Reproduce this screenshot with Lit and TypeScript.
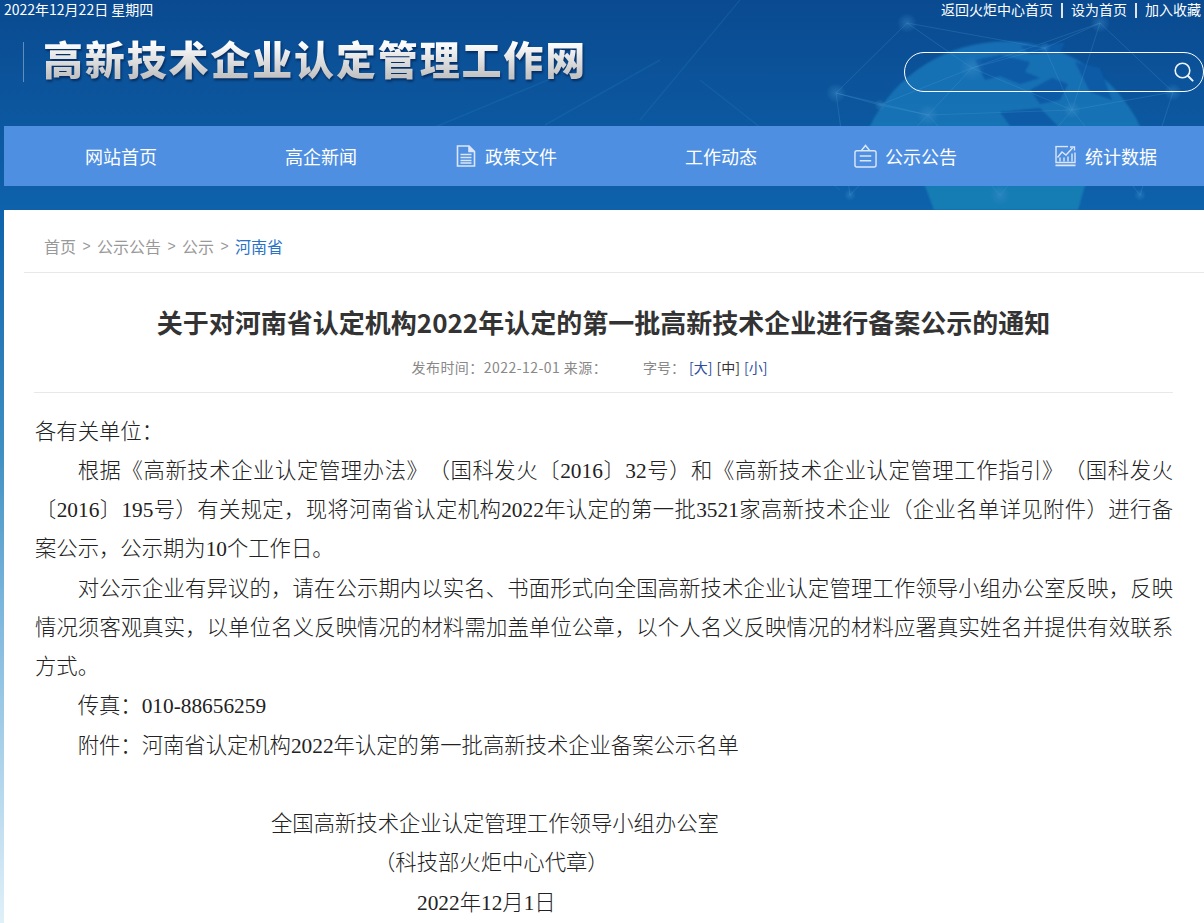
import { LitElement, html, css, svg } from "lit";
import { customElement } from "lit/decorators.js";

const nodes: [number, number, number][] = [
  [907, 23, 10], [1100, 23, 10], [836, 93, 10], [972, 68, 13], [1173, 92, 9],
  [1072, 110, 9], [928, 115, 11], [880, 105, 6], [1045, 48, 6], [1000, 195, 10],
  [850, 195, 6], [1140, 195, 6],
];
const links: [number, number][] = [
  [0, 2], [0, 3], [0, 8], [1, 8], [1, 4], [1, 5], [2, 7], [2, 6], [3, 6], [3, 5], [3, 7], [3, 8], [5, 4],
  [5, 8], [5, 6], [7, 6], [1, 3], [6, 9], [5, 9], [2, 10], [4, 11], [5, 11], [6, 10],
];

const background = svg`
  <svg class="art" viewBox="0 0 1204 210" preserveAspectRatio="none" aria-hidden="true">
    <defs>
      <radialGradient id="glow"><stop offset="0" stop-color="#3f90cc" stop-opacity=".45"/><stop offset="1" stop-color="#3f90cc" stop-opacity="0"/></radialGradient>
      <linearGradient id="sphere" x1="0" y1="0" x2="0" y2="1"><stop offset="0" stop-color="#186eb4"/><stop offset=".6" stop-color="#1274b4"/><stop offset="1" stop-color="#157eb4"/></linearGradient>
      <filter id="soft"><feGaussianBlur stdDeviation="1.2"/></filter>
    </defs>
    <g stroke="#2b86c6" stroke-opacity=".2" stroke-width="1.5" fill="none">
      <path d="M380 150 L560 75 M545 125 L660 60 M700 80 L840 190 M740 0 L640 120"/>
    </g>
    <g filter="url(#soft)">
      <path fill="url(#sphere)" d="M870 126 A150 150 0 0 1 1140 126 L1140 150 L1085 186 L1078 210 L934 210 L925 186 L870 150 Z"/>
      <g fill="#0b5aa6">
        <path d="M975 60 L1000 55 L1030 62 L1025 72 L1040 78 L1020 84 L1000 76 L985 80 Z"/>
        <path d="M1020 46 L1065 43 L1060 52 L1030 54 Z"/>
        <path d="M1030 90 L1052 78 L1068 84 L1060 100 L1040 104 Z"/>
        <path d="M1000 112 L1040 108 L1058 126 L1010 126 Z"/>
        <path d="M1075 62 L1100 68 L1112 100 L1090 92 Z"/>
      </g>
    </g>
    <g stroke="#4f9fd6" stroke-opacity=".25" stroke-width="1">
      ${links.map(([a, b]) => svg`<line x1=${nodes[a][0]} y1=${nodes[a][1]} x2=${nodes[b][0]} y2=${nodes[b][1]}/>`)}
    </g>
    ${nodes.map(([x, y, r]) => svg`<circle cx=${x} cy=${y} r=${r} fill="url(#glow)"/>`)}
  </svg>`;

const docIcon = svg`<svg class="ico doc" viewBox="0 0 20 22" fill="none" stroke="#dbe7f8" stroke-width="1.6" aria-hidden="true">
  <path d="M1.5 1h11.5l5.5 5.5V21H1.5Z"/><path d="M13 1v5.5h5.5" fill="#dbe7f8"/><path d="M4.5 9.5h11M4.5 12.5h11M4.5 15.5h11M4.5 18h11" stroke-width="1.3"/></svg>`;
const boardIcon = svg`<svg class="ico board" viewBox="0 0 24 24" fill="none" stroke="#dbe7f8" stroke-width="1.5" aria-hidden="true">
  <rect x="1" y="6.5" width="22" height="17" rx="2"/><path d="M7.5 6.5 L12 1 L16.5 6.5"/><path d="M6 12h12M6 17h12"/></svg>`;
const chartIcon = svg`<svg class="ico chart" viewBox="0 0 21 21" fill="none" stroke="#dbe7f8" stroke-width="1.4" aria-hidden="true">
  <path d="M13 1H1v16h19V7"/><path d="M2.5 12 L7 6.5 L11 9.5 L17.5 2.5"/><path d="M15 1.5h4.5V5" /><path d="M5 16v-4M9 16v-4M13 16v-5M17 16V8"/><path d="M0.5 20h20" stroke-width="2"/></svg>`;
const searchIcon = svg`<svg class="search-ico" viewBox="0 0 20 20" fill="none" stroke="#eef4fb" aria-hidden="true">
  <circle cx="8.5" cy="8.5" r="7.3" stroke-width="1.6"/><path d="M14 14l4.6 4.6" stroke-width="2" stroke-linecap="round"/></svg>`;

@customElement("app-root")
export class AppRoot extends LitElement {
  static styles = css`
    :host {
      display: block;
      height: 923px;
      overflow: hidden;
      position: relative;
      font-family: "Noto Sans CJK SC", sans-serif;
      background: linear-gradient(180deg, #0a4a90 0, #0d62ab 210px, #3f8fc2 450px, #7ab5dc 600px, #e0f0f9 923px);
    }
    .art { position: absolute; left: 0; top: 0; width: 1204px; height: 210px; }
    .head { position: relative; height: 126px; display: flex; flex-direction: column; }
    .top { display: flex; justify-content: space-between; padding: 0 3px 0 4px; font-size: 14px; line-height: 18px; color: #fff; }
    .links { display: flex; align-items: center; gap: 8px; }
    .sep { width: 2px; height: 15px; margin-top: 2px; background: #dfe6ee; }
    .brand { display: flex; justify-content: space-between; align-items: flex-start; padding-left: 23px; margin-top: 24px; }
    .logo { display: flex; align-items: flex-start; border-left: 1px solid rgba(255,255,255,.35); height: 40px; padding-left: 19px; }
    .logo-text {
      margin-top: -6px;
      font-size: 40px; font-weight: 900; line-height: 44px; letter-spacing: 1.85px;
      background: linear-gradient(180deg, #ffffff 15%, #c4c4c4 90%);
      -webkit-background-clip: text; background-clip: text; color: transparent;
      filter: drop-shadow(1px 2px 1px rgba(0,20,60,.6));
    }
    .search { width: 300px; height: 40px; box-sizing: border-box; margin-top: 10px; border: 1.5px solid #fff; border-radius: 20px; display: flex; align-items: center; justify-content: flex-end; padding-right: 9px; }
    .search-ico { width: 20px; height: 20px; }
    nav { position: relative; margin-left: 4px; height: 60px; background: #4f8fe1; display: grid; grid-template-columns: repeat(6, 200px); }
    .item { padding-left: 34px; display: flex; align-items: center; justify-content: center; color: #fff; font-size: 18px; }
    .label { position: relative; }
    .ico { position: absolute; right: 100%; top: 50%; margin-right: 9px; transform: translateY(-50%); }
    .doc { width: 20px; height: 22px; }
    .board { width: 23px; height: 24px; margin-right: 8px; }
    .chart { width: 21px; height: 21px; }
    .card { position: relative; margin: 24px 0 0 4px; height: 713px; background: #fff; padding-left: 20px; }
    .crumb { height: 63px; box-sizing: border-box; border-bottom: 1px solid #e8e8e8; padding: 25px 0 0 20px; font-size: 16px; line-height: 22px; color: #999; display: flex; align-items: flex-start; gap: 6px; }
    .crumb .arrow { width: 9px; text-align: center; font-family: "Liberation Sans", sans-serif; font-size: 14px; }
    .crumb .now { color: #2a72c6; }
    .article { padding: 0 31px 0 10px; }
    h1 { margin: 29px 0 0; font-size: 26px; line-height: 40px; font-weight: 700; color: #333; text-align: center; }
    .meta { margin-top: 15px; height: 36px; box-sizing: border-box; border-bottom: 1px solid #e8e8e8; display: flex; justify-content: center; gap: 36px; font-size: 14px; line-height: 20px; color: #888; padding-right: 28px; }
    .pub { letter-spacing: .45px; }
    .sizes { display: flex; gap: 4px; }
    .sizes .a { color: #2a4f9c; }
    .sizes .b { color: #333; }
    .text { margin-top: 19.5px; padding-left: 1px; font-family: "Liberation Serif", "Noto Sans CJK SC", serif; font-size: 21.33px; line-height: 39.25px; font-weight: 300; color: #222; text-spacing-trim: space-all; }
    .text p { margin: 0; text-align: justify; }
    .text p.in { text-indent: 2em; }
    .gap { height: 39.25px; }
    .s1 { padding-left: 236px; }
    .s2 { padding-left: 339px; }
    .s3 { padding-left: 382px; }
  `;

  render() {
    return html`
      ${background}
      <header class="head">
        <div class="top">
          <span>2022年12月22日 星期四</span>
          <div class="links"><span>返回火炬中心首页</span><i class="sep"></i><span>设为首页</span><i class="sep"></i><span>加入收藏</span></div>
        </div>
        <div class="brand">
          <div class="logo"><span class="logo-text">高新技术企业认定管理工作网</span></div>
          <div class="search">${searchIcon}</div>
        </div>
      </header>
      <nav>
        <div class="item"><span class="label">网站首页</span></div>
        <div class="item"><span class="label">高企新闻</span></div>
        <div class="item"><span class="label">${docIcon}政策文件</span></div>
        <div class="item"><span class="label">工作动态</span></div>
        <div class="item"><span class="label">${boardIcon}公示公告</span></div>
        <div class="item"><span class="label">${chartIcon}统计数据</span></div>
      </nav>
      <main class="card">
        <div class="crumb"><span>首页</span><span class="arrow">&gt;</span><span>公示公告</span><span class="arrow">&gt;</span><span>公示</span><span class="arrow">&gt;</span><span class="now">河南省</span></div>
        <article class="article">
          <h1>关于对河南省认定机构2022年认定的第一批高新技术企业进行备案公示的通知</h1>
          <div class="meta">
            <span class="pub">发布时间：2022-12-01 来源：</span>
            <span class="sizes"><span class="tag">字号：</span><span class="a">[大]</span><span class="b">[中]</span><span class="a">[小]</span></span>
          </div>
          <div class="text">
            <p>各有关单位：</p>
            <p class="in">根据《高新技术企业认定管理办法》（国科发火〔2016〕32号）和《高新技术企业认定管理工作指引》（国科发火〔2016〕195号）有关规定，现将河南省认定机构2022年认定的第一批3521家高新技术企业（企业名单详见附件）进行备案公示，公示期为10个工作日。</p>
            <p class="in">对公示企业有异议的，请在公示期内以实名、书面形式向全国高新技术企业认定管理工作领导小组办公室反映，反映情况须客观真实，以单位名义反映情况的材料需加盖单位公章，以个人名义反映情况的材料应署真实姓名并提供有效联系方式。</p>
            <p class="in">传真：010-88656259</p>
            <p class="in">附件：河南省认定机构2022年认定的第一批高新技术企业备案公示名单</p>
            <div class="gap"></div>
            <p class="s1">全国高新技术企业认定管理工作领导小组办公室</p>
            <p class="s2">（科技部火炬中心代章）</p>
            <p class="s3">2022年12月1日</p>
          </div>
        </article>
      </main>
    `;
  }
}
